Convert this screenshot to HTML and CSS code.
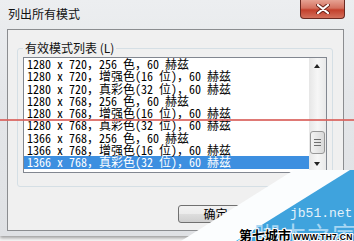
FILE: index.html
```html
<!DOCTYPE html>
<html lang="zh-CN">
<head>
  <meta charset="UTF-8" />
  <title>列出所有模式</title>
  <link rel="stylesheet" href="styles.css">
</head>
<body>
  <div class="window">
    <!-- Title Bar -->
    <div class="titlebar">
      <span class="title">列出所有模式</span>
      <button class="close-btn" aria-label="关闭">
        <svg width="14" height="10" viewBox="0 0 14 10">
          <path d="M2 1 L12 9 M12 1 L2 9" stroke="#6b231a" stroke-width="4" stroke-linecap="round" />
          <path d="M2 1 L12 9 M12 1 L2 9" stroke="#fff" stroke-width="2.2" stroke-linecap="round" />
        </svg>
      </button>
    </div>

    <!-- Dialog Body -->
    <div class="panel">
      <fieldset class="group">
        <legend>有效模式列表 (L)</legend>
        <div class="listbox">
          <ul class="rows">
            <li>1280 x 720，256 色，60 赫兹</li>
            <li>1280 x 720，增强色(16 位)，60 赫兹</li>
            <li>1280 x 720，真彩色(32 位)，60 赫兹</li>
            <li>1280 x 768，256 色，60 赫兹</li>
            <li>1280 x 768，增强色(16 位)，60 赫兹</li>
            <li>1280 x 768，真彩色(32 位)，60 赫兹</li>
            <li>1366 x 768，256 色，60 赫兹</li>
            <li>1366 x 768，增强色(16 位)，60 赫兹</li>
            <li class="selected">1366 x 768，真彩色(32 位)，60 赫兹</li>
          </ul>
          <div class="scrollbar">
            <div class="arrow up"></div>
            <div class="track">
              <div class="thumb"><i></i><i></i><i></i></div>
            </div>
            <div class="arrow down"></div>
          </div>
        </div>
      </fieldset>

      <div class="actions">
        <button class="btn">确定</button>
      </div>
    </div>
  </div>

  <!-- Red marker line over the screenshot -->
  <div class="marker"></div>

  <!-- Watermark -->
  <svg class="watermark" width="175" height="71" viewBox="179 170 175 71">
    <polygon points="294,170 354,170 354,241 181,241" fill="#fbfdfe" />
    <polygon points="350,170 354,170 354,241 236,241" fill="#3fa3dd" />
    <text x="290" y="217" class="wm-site">jb51.net</text>
    <text x="254" y="246" class="wm-cn">脚本之家</text>
    <text x="239" y="240" class="wm-black">第七城市</text>
    <text x="293" y="240" class="wm-small">WWW.TH7.CN</text>
  </svg>
</body>
</html>
```

FILE: styles.css
```css
html, body {
  margin: 0;
  padding: 0;
}

body {
  width: 354px;
  height: 241px;
  overflow: hidden;
  position: relative;
  background: #f4f4f4;
  font-family: "Noto Sans CJK SC", "Liberation Sans", sans-serif;
  font-size: 12px;
  color: #000;
}

.window {
  height: 236px;
  box-sizing: border-box;
  padding: 0 10px 0 7px;
  background: linear-gradient(#eceef0, #e4e6e9 40%, #dfe1e4);
  box-shadow: 0 2px 3px rgba(0, 0, 0, 0.35);
}

.titlebar {
  height: 29px;
  display: flex;
  justify-content: space-between;
  align-items: flex-start;
}

.title {
  margin: 8px 0 0 1px;
  line-height: 12px;
  color: #111;
}

.close-btn {
  width: 45px;
  height: 19px;
  margin-right: -1px;
  padding: 0;
  border: 1px solid #6a2a22;
  border-top: none;
  border-radius: 0 0 4px 4px;
  background: linear-gradient(#e6a293, #d4715f 45%, #c3402c 55%, #d3705c);
  display: flex;
  justify-content: center;
  align-items: center;
}

.panel {
  height: 202px;
  box-sizing: border-box;
  border: 1px solid #8b8d90;
  background: #f0f0f0;
  display: flex;
  flex-direction: column;
}

/* Group box */
.group {
  margin: 12px 10px 0 9px;
  padding: 3px 5px 13px 5px;
  border: 1px solid #d5dfe5;
  border-radius: 3px;
  min-width: 0;
}

.group legend {
  padding: 0 2px;
  line-height: 12px;
  color: #111;
}

/* List box */
.listbox {
  height: 116px;
  box-sizing: border-box;
  border: 1px solid #828790;
  background: #fff;
  display: flex;
}

.rows {
  flex: 1;
  margin: 0;
  padding: 0;
  list-style: none;
  font-family: "Noto Sans Mono CJK SC", "Liberation Mono", "Noto Sans CJK SC", monospace;
  font-size: 12px;
}

.rows li {
  height: 12.3px;
  line-height: 12.3px;
  padding-left: 3px;
  white-space: nowrap;
}

.rows li.selected {
  background: #3d8fe0;
  color: #fff;
}

.scrollbar {
  width: 17px;
  display: flex;
  flex-direction: column;
  background: linear-gradient(90deg, #e6e6e6, #f6f6f6 50%, #e9e9e9);
}

.arrow {
  height: 16px;
  position: relative;
}

.arrow::after {
  content: "";
  position: absolute;
  left: 5px;
  top: 6px;
  border-left: 3.5px solid transparent;
  border-right: 3.5px solid transparent;
}

.arrow.up::after {
  border-bottom: 4px solid #222;
}

.arrow.down::after {
  border-top: 4px solid #222;
}

.track {
  flex: 1;
  display: flex;
  flex-direction: column;
  justify-content: flex-end;
  padding-bottom: 2px;
}

.thumb {
  height: 21px;
  margin: 0 1px;
  border: 1px solid #979797;
  border-radius: 3px;
  background: linear-gradient(90deg, #f3f3f3, #e6e6e6 50%, #d9d9d9);
  display: flex;
  flex-direction: column;
  justify-content: center;
  align-items: center;
  gap: 2px;
}

.thumb i {
  width: 7px;
  height: 1px;
  background: #6f6f6f;
}

/* Buttons */
.actions {
  margin-top: 18px;
  padding-left: 170px;
}

.btn {
  width: 75px;
  height: 18px;
  padding: 0;
  border: 1px solid #707070;
  border-radius: 3px;
  background: linear-gradient(#f2f2f2, #ebebeb 50%, #dddddd 51%, #cfcfcf);
  font-family: "Noto Sans CJK SC", sans-serif;
  font-size: 12px;
  line-height: 16px;
  color: #000;
}

/* Overlays */
.marker {
  position: absolute;
  left: 0;
  top: 119px;
  width: 100%;
  height: 2px;
  background: #d9615d;
  opacity: 0.85;
}

.watermark {
  position: absolute;
  right: 0;
  bottom: 0;
}

.wm-site {
  font-family: "Liberation Mono", monospace;
  font-size: 13px;
  fill: #e4f2fb;
}

.wm-cn {
  font-family: "Noto Sans CJK SC", sans-serif;
  font-size: 26px;
  fill: #a6d6f3;
}

.wm-black {
  font-family: "Noto Sans CJK SC", sans-serif;
  font-size: 13px;
  font-weight: bold;
  fill: #000;
  stroke: #fff;
  stroke-width: 2px;
  paint-order: stroke;
}

.wm-small {
  font-family: "Liberation Sans", sans-serif;
  font-size: 8.5px;
  font-weight: bold;
  letter-spacing: 0.3px;
  fill: #000;
  stroke: #fff;
  stroke-width: 2px;
  paint-order: stroke;
}
```
